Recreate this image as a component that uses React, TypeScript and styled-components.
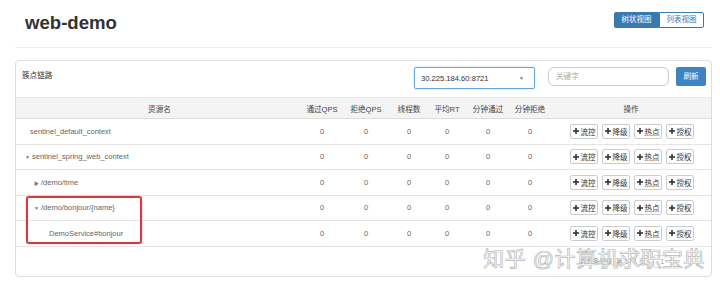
import React from 'react'
import styled, { createGlobalStyle } from 'styled-components'

const GlobalStyle = createGlobalStyle`
  html, body {
    margin: 0;
    padding: 0;
    background: #fff;
  }
  body {
    font-family: "Liberation Sans", "Noto Sans CJK SC", sans-serif;
    color: #555;
  }
  * {
    box-sizing: border-box;
  }
`

interface ResourceRow {
  name: string
  indent: number
  toggle?: 'open' | 'closed'
}

const rows: ResourceRow[] = [
  { name: 'sentinel_default_context', indent: 14 },
  { name: 'sentinel_spring_web_context', indent: 9, toggle: 'open' },
  { name: '/demo/time', indent: 18, toggle: 'closed' },
  { name: '/demo/bonjour/{name}', indent: 18, toggle: 'open' },
  { name: 'DemoService#bonjour', indent: 33 },
]

const metricHeads = ['通过QPS', '拒绝QPS', '线程数', '平均RT', '分钟通过', '分钟拒绝']
const actions = ['流控', '降级', '热点', '授权']

const PlusIcon: React.FC = () => (
  <svg width="6" height="6" viewBox="0 0 6 6">
    <rect x="2.2" y="0" width="1.6" height="6" fill="#333" />
    <rect x="0" y="2.2" width="6" height="1.6" fill="#333" />
  </svg>
)

const App: React.FC = () => {
  return (
    <>
      <GlobalStyle />
      <Page>
        <Header>
          <Title>web-demo</Title>
          <ViewSwitch>
            <ViewButton active>树状视图</ViewButton>
            <ViewButton>列表视图</ViewButton>
          </ViewSwitch>
        </Header>

        <Panel>
          <PanelHeading>
            <PanelTitle>簇点链路</PanelTitle>
            <Select>
              <span>30.225.184.60:8721</span>
              <Caret>▼</Caret>
            </Select>
            <SearchInput placeholder="关键字" />
            <RefreshButton>刷新</RefreshButton>
          </PanelHeading>

          <TableHead>
            <Cell center>资源名</Cell>
            {metricHeads.map((h) => (
              <Cell center key={h}>{h}</Cell>
            ))}
            <Cell center>操作</Cell>
          </TableHead>

          <TableBody>
            {rows.map((r) => (
              <Row key={r.name}>
                <NameCell style={{ paddingLeft: r.indent }}>
                  {r.toggle && <Toggle>{r.toggle === 'open' ? '▼' : '▶'}</Toggle>}
                  {r.name}
                </NameCell>
                {metricHeads.map((h) => (
                  <Cell center key={h}>0</Cell>
                ))}
                <ActionCell>
                  {actions.map((a) => (
                    <ActionButton key={a}>
                      <PlusIcon />
                      {a}
                    </ActionButton>
                  ))}
                </ActionCell>
              </Row>
            ))}
            <Highlight />
          </TableBody>

          <PanelFooter>
            <Pager>共 5 条记录, 第 1 / 1 页</Pager>
            <PageBox>1</PageBox>
          </PanelFooter>
          <Watermark>知乎 @计算机求职宝典</Watermark>
        </Panel>
      </Page>
    </>
  )
}

const Page = styled.div`
  width: 720px;
  height: 290px;
  padding: 0 8px 0 15px;
  overflow: hidden;
`

const Header = styled.div`
  display: flex;
  align-items: flex-start;
  justify-content: space-between;
  height: 48px;
  border-bottom: 1px solid #eee;
  padding: 0 8px 0 10px;
`

const Title = styled.h1`
  margin: 12px 0 0;
  font-size: 18.6px;
  font-weight: 700;
  color: #333;
  line-height: 22px;
`

const ViewSwitch = styled.div`
  display: flex;
  margin-top: 12px;
`

const ViewButton = styled.div<{ active?: boolean }>`
  width: 45px;
  height: 16px;
  font-size: 7.5px;
  line-height: 14px;
  white-space: nowrap;
  text-align: center;
  border: 1px solid #3a78b0;
  background: ${(p) => (p.active ? '#3a78b0' : '#fff')};
  color: ${(p) => (p.active ? '#fff' : '#3a78b0')};
  border-radius: ${(p) => (p.active ? '2px 0 0 2px' : '0 2px 2px 0')};
`

const Panel = styled.div`
  position: relative;
  margin-top: 12px;
  width: 697px;
  height: 217px;
  border: 1px solid #ddd;
  border-radius: 4px;
  display: flex;
  flex-direction: column;
`

const PanelHeading = styled.div`
  display: flex;
  align-items: flex-start;
  height: 36px;
  padding: 6px 5px 0 6px;
  font-size: 7.6px;
`

const PanelTitle = styled.div`
  margin-top: 2px;
  color: #333;
  width: 392px;
`

const Select = styled.div`
  display: flex;
  align-items: center;
  justify-content: space-between;
  width: 121px;
  height: 22px;
  padding: 0 10px 0 6px;
  border: 1px solid #66a3d8;
  border-radius: 2px;
  color: #333;
  box-shadow: 0 0 2px rgba(102, 163, 216, 0.4);
`

const Caret = styled.span`
  font-size: 5px;
  color: #777;
`

const SearchInput = styled.input`
  margin-left: 13px;
  width: 121px;
  height: 19px;
  border: 1px solid #ccc;
  border-radius: 6px;
  padding: 0 7px;
  font-family: inherit;
  font-size: 7.6px;
  outline: none;
  &::placeholder {
    color: #aaa;
  }
`

const RefreshButton = styled.div`
  margin-left: 7px;
  width: 30px;
  height: 19px;
  background: #3e84c4;
  border-radius: 2px;
  color: #fff;
  text-align: center;
  line-height: 19px;
`

const gridCols = '287px 38px 50px 36px 40px 42px 42px 1fr'

const TableHead = styled.div`
  display: grid;
  grid-template-columns: ${gridCols};
  height: 22px;
  align-items: center;
  background: #f4f4f4;
  border-top: 1px solid #e8e8e8;
  border-bottom: 1px solid #ddd;
  font-size: 7.6px;
  color: #444;
`

const Cell = styled.div<{ center?: boolean }>`
  text-align: ${(p) => (p.center ? 'center' : 'left')};
  white-space: nowrap;
`

const TableBody = styled.div`
  position: relative;
`

const Row = styled.div`
  display: grid;
  grid-template-columns: ${gridCols};
  height: 25.5px;
  align-items: center;
  border-bottom: 1px solid #e4e4e4;
  font-size: 7.5px;
  color: #666;
`

const NameCell = styled.div`
  display: flex;
  align-items: center;
  white-space: nowrap;
`

const Toggle = styled.span`
  display: inline-block;
  width: 7px;
  font-size: 5px;
  color: #777;
`

const ActionCell = styled.div`
  display: flex;
  justify-content: center;
  gap: 4px;
  padding-left: 2px;
`

const ActionButton = styled.div`
  display: flex;
  align-items: center;
  justify-content: center;
  gap: 2px;
  width: 28px;
  height: 15px;
  border: 1px solid #ccc;
  border-radius: 2px;
  background: #fff;
  color: #333;
  font-size: 7.5px;
`

const Highlight = styled.div`
  position: absolute;
  left: 10px;
  top: 77px;
  width: 116px;
  height: 48px;
  border: 2px solid #d9363e;
  border-radius: 3px;
  box-shadow: 0 0 2px rgba(217, 54, 62, 0.35);
  pointer-events: none;
`

const PanelFooter = styled.div`
  display: flex;
  align-items: center;
  justify-content: flex-end;
  gap: 8px;
  flex: 1;
  padding-right: 40px;
  font-size: 6.5px;
  color: #999;
`

const Pager = styled.span``

const PageBox = styled.span`
  border: 1px solid #ddd;
  padding: 2px 6px;
  border-radius: 2px;
`

const Watermark = styled.div`
  position: absolute;
  right: 6px;
  bottom: 4px;
  font-size: 21px;
  letter-spacing: 0.5px;
  color: rgba(255, 255, 255, 0.85);
  -webkit-text-stroke: 0.7px #b8b8b8;
  white-space: nowrap;
  pointer-events: none;
`

export default App
